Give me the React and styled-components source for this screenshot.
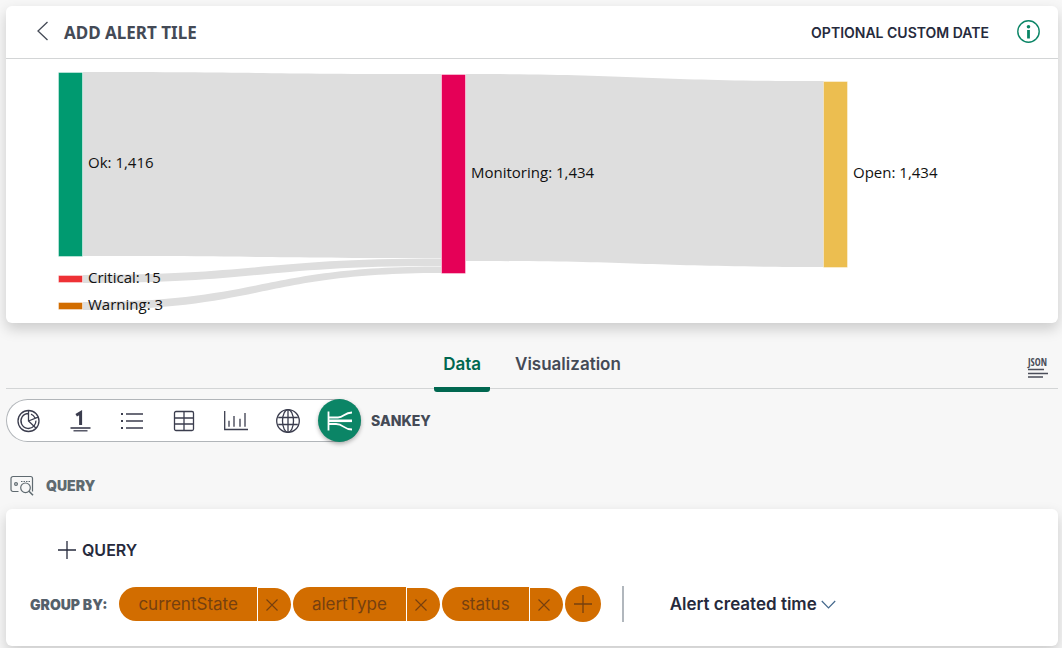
import { useState } from "react";
import styled, { createGlobalStyle } from "styled-components";

const GlobalStyle = createGlobalStyle`
  * {
    box-sizing: border-box;
  }

  body {
    margin: 0;
    background: #f7f7f7;
    color: #444a56;
    font-family: Inter, "Liberation Sans", sans-serif;
    font-size: 17px;
  }

  button {
    border: 0;
    padding: 0;
    background: none;
    color: inherit;
    font: inherit;
    cursor: pointer;
  }
`;

const Page = styled.main`
  padding: 6px 4px 2px 6px;
`;

const Card = styled.section`
  background: #fff;
  border-radius: 6px;
  box-shadow: 0 6px 14px rgba(0, 0, 0, 0.18);
`;

const CardHeader = styled.header`
  display: flex;
  align-items: center;
  height: 53px;
  padding: 0 18px 0 30px;
  border-bottom: 1px solid #d3d5d6;
`;

const BackButton = styled.button`
  display: flex;
  margin: 0 15px 2px 0;
`;

const Title = styled.h1`
  flex: 1;
  margin: 0;
  font-family: "Noto Sans", "Open Sans", sans-serif;
  font-size: 17px;
  font-weight: 700;
`;

const DateButton = styled.button`
  margin-right: 28px;
  color: #262a3c;
  font-size: 14px;
  font-weight: 600;
`;

const InfoButton = styled.button`
  display: flex;
  margin-bottom: 2px;
`;

const Chart = styled.svg`
  display: block;
  width: 100%;
  height: auto;

  text {
    font-family: "Open Sans", "Noto Sans", sans-serif;
    font-size: 15px;
    fill: #111;
  }
`;

const TabBar = styled.nav`
  display: flex;
  align-items: flex-end;
  height: 66px;
  border-bottom: 1px solid #d3d5d6;
`;

const TabSide = styled.div`
  display: flex;
  flex: 1;
  justify-content: flex-end;
  padding: 0 9px 10px 0;
`;

const Tabs = styled.div`
  display: flex;
  gap: 16px;
  margin-bottom: -4px;
`;

const Tab = styled.button`
  height: 42px;
  padding: 0 9px 10px;
  border-bottom: 5px solid ${({ $active }) => ($active ? "#006750" : "transparent")};
  border-radius: 3px;
  color: ${({ $active }) => ($active ? "#006750" : "#444a56")};
  font-weight: 600;
`;

const JsonButton = styled.button`
  display: flex;
`;

const TypeRow = styled.div`
  display: flex;
  align-items: center;
  gap: 10px;
  margin-top: 10px;
`;

const TypePicker = styled.div`
  display: flex;
  gap: 9px;
  background: #fff;
  border-radius: 22px;
  box-shadow: inset 0 0 0 1px #b1b5b9;
`;

const TypeButton = styled.button`
  display: flex;
  align-items: center;
  justify-content: center;
  width: 43px;
  height: 43px;
  border-radius: 50%;
  color: ${({ $active }) => ($active ? "#fff" : "#3b3d4e")};
  background: ${({ $active }) => ($active ? "#0b8566" : "transparent")};
  box-shadow: ${({ $active }) => ($active ? "0 2px 4px rgba(0, 0, 0, 0.3)" : "none")};
`;

const TypeName = styled.strong`
  font-size: 14px;
  font-weight: 800;
`;

const SectionHeading = styled.h2`
  display: flex;
  align-items: center;
  gap: 12px;
  height: 24px;
  margin: 31px 0 12px;
  padding-left: 4px;
  color: #5f6a70;
  font-size: 14px;
  font-weight: 900;
`;

const QueryCard = styled(Card)`
  padding: 28px 24px 24px;
`;

const AddQuery = styled.button`
  display: flex;
  align-items: center;
  gap: 6px;
  height: 26px;
  margin: 0 0 23px 28px;
  color: #262a3c;
  font-size: 16px;
  font-weight: 600;
`;

const GroupRow = styled.div`
  display: flex;
  align-items: center;
`;

const GroupLabel = styled.span`
  margin-right: 12px;
  color: #55616b;
  font-size: 14px;
  font-weight: 900;
`;

const Chip = styled.div`
  display: flex;
  align-items: flex-end;
  gap: 1px;
  margin-right: 2px;
`;

const ChipName = styled.button`
  height: 34px;
  padding: 0 19px;
  border-radius: 17px 0 0 17px;
  background: #d26d00;
  color: #76400f;
`;

const ChipRemove = styled.button`
  display: flex;
  align-items: center;
  justify-content: center;
  width: 33px;
  height: 33px;
  padding-right: 4px;
  border-radius: 0 17px 17px 0;
  background: #d26d00;
  color: #76400f;
`;

const AddGroup = styled.button`
  display: flex;
  align-items: center;
  justify-content: center;
  width: 36px;
  height: 36px;
  border-radius: 50%;
  background: #d26d00;
  color: #76400f;
`;

const Divider = styled.span`
  width: 2px;
  height: 36px;
  margin: 0 46px 0 21px;
  background: #b1b7bd;
`;

const TimeButton = styled.button`
  display: flex;
  align-items: center;
  gap: 4px;
  color: #262a3c;
  font-weight: 600;
`;

const Icon = ({ width = 24, height = width, stroke = 1.3, children }) => (
  <svg
    width={width}
    height={height}
    viewBox={`0 0 ${width} ${height}`}
    fill="none"
    stroke="currentColor"
    strokeWidth={stroke}
    aria-hidden="true"
  >
    {children}
  </svg>
);

const types = [
  {
    name: "Donut",
    icon: (
      <Icon>
        <circle cx="12.5" cy="12" r="10.5" />
        <path d="M12.5 4.5a7.500 7.500 0 1 0 5.600 12.400M12.500 1.500V12l7.600 7.200M12.500 12l9.600-3.800M15 5.200a7.500 7.500 0 0 1 4 3.800M19.900 11.600a7.400 7.400 0 0 1-1.600 5" />
      </Icon>
    ),
  },
  {
    name: "Number",
    icon: (
      <Icon>
        <path d="M8.2 6.2 12.600 3.600V16" strokeWidth="3" />
        <path d="M2.500 19h20" strokeWidth="1.600" />
        <path d="M5.500 21.800h14" />
      </Icon>
    ),
  },
  {
    name: "List",
    icon: (
      <Icon>
        <path d="M6 5h17M6 12h17M6 19h17" />
        <path d="M1 5h2M1 12h2M1 19h2" strokeWidth="2" />
      </Icon>
    ),
  },
  {
    name: "Table",
    icon: (
      <Icon>
        <rect x="2.5" y="2.5" width="19" height="19" rx="1.5" />
        <path d="M12 2.5v19M2.5 9h19M2.5 15h19" />
      </Icon>
    ),
  },
  {
    name: "Bar chart",
    icon: (
      <Icon>
        <path d="M.7 2v18.5h23.8M5 11.8v6M10 7v10.8M16 9.8v8M21 4v13.8" />
      </Icon>
    ),
  },
  {
    name: "Map",
    icon: (
      <Icon>
        <circle cx="12" cy="12" r="11.3" />
        <ellipse cx="12" cy="12" rx="5.5" ry="11.3" />
        <path d="M12 .7v22.6M2.2 8.5h19.6M2.2 15.5h19.6" />
      </Icon>
    ),
  },
  {
    name: "Sankey",
    icon: (
      <Icon width={26} height={24} stroke={1.8}>
        <path d="M1.5 2.5v19" />
        <path d="M2 8.5h9c6 0 6-5 14-5M2 15h7c8 0 7 5.5 16 5.5" />
        <path d="M2 11.8h23" strokeWidth="2.6" />
      </Icon>
    ),
  },
];

const nodes = [
  { label: "Ok: 1,416", x: 52, y: 13, height: 185, color: "#009a70", textY: 109 },
  { label: "Critical: 15", x: 52, y: 216, height: 8, color: "#ee3135", textY: 224 },
  { label: "Warning: 3", x: 52, y: 243, height: 8, color: "#d26d00", textY: 251 },
  { label: "Monitoring: 1,434", x: 435, y: 15, height: 200, color: "#e50057", textY: 119 },
  { label: "Open: 1,434", x: 817, y: 22, height: 187, color: "#ecbe50", textY: 119 },
];

// from and to are the [top, bottom] edges of the ribbon on each side
const links = [
  { x1: 77, x2: 435, from: [13, 197], to: [15, 199] },
  { x1: 77, x2: 435, from: [216, 224], to: [199.6, 207] },
  { x1: 77, x2: 435, from: [243, 251], to: [207.6, 214] },
  { x1: 460, x2: 818, from: [15, 202], to: [22, 208] },
];

const ribbon = ({ x1, x2, from, to }) => {
  const mid = (x1 + x2) / 2;
  return (
    `M${x1} ${from[0]}C${mid} ${from[0]} ${mid} ${to[0]} ${x2} ${to[0]}` +
    `V${to[1]}C${mid} ${to[1]} ${mid} ${from[1]} ${x1} ${from[1]}Z`
  );
};

const SankeyChart = () => (
  <Chart viewBox="0 0 1052 264" role="img" aria-label="Sankey">
    {links.map((link) => (
      <path key={ribbon(link)} d={ribbon(link)} fill="#dedede" />
    ))}
    {nodes.map((node) => (
      <g key={node.label}>
        <rect
          x={node.x + 0.5}
          y={node.y + 0.5}
          width="24"
          height={node.height - 1}
          fill={node.color}
          stroke="#fff"
          strokeOpacity="0.4"
        />
        <text x={node.x + 30} y={node.textY}>
          {node.label}
        </text>
      </g>
    ))}
  </Chart>
);

const App = () => {
  const [tab, setTab] = useState("Data");
  const [type, setType] = useState("Sankey");
  const [groups, setGroups] = useState(["currentState", "alertType", "status"]);

  return (
    <Page>
      <GlobalStyle />
      <Card>
        <CardHeader>
          <BackButton aria-label="Back">
            <Icon width={13} height={20}>
              <path d="M11.5 1 2 10l9.5 9" />
            </Icon>
          </BackButton>
          <Title>ADD ALERT TILE</Title>
          <DateButton>OPTIONAL CUSTOM DATE</DateButton>
          <InfoButton aria-label="Info">
            <svg width="23" height="23" viewBox="0 0 23 23" fill="none" stroke="#0b8566">
              <circle cx="11.5" cy="11.5" r="10.7" strokeWidth="1.4" />
              <circle cx="11.5" cy="6.7" r="1.8" fill="#0b8566" stroke="none" />
              <path d="M11.5 10v8.5" strokeWidth="2.8" />
            </svg>
          </InfoButton>
        </CardHeader>
        <SankeyChart />
      </Card>

      <TabBar>
        <TabSide />
        <Tabs>
          {["Data", "Visualization"].map((name) => (
            <Tab key={name} $active={tab === name} onClick={() => setTab(name)}>
              {name}
            </Tab>
          ))}
        </Tabs>
        <TabSide>
          <JsonButton>
            <svg width="24" height="22" viewBox="0 0 24 22" fill="none" stroke="#4b4e5a">
              <text
                x="3"
                y="10"
                fill="#4b4e5a"
                stroke="none"
                fontFamily="'Liberation Sans Narrow', 'Open Sans Condensed', 'Roboto Condensed', sans-serif"
                fontSize="10"
                fontWeight="700"
              >
                JSON
              </text>
              <path d="M3 13.5h16M3 17.5h20M3 21h15" strokeWidth="1.4" />
            </svg>
          </JsonButton>
        </TabSide>
      </TabBar>

      <TypeRow>
        <TypePicker>
          {types.map(({ name, icon }) => (
            <TypeButton
              key={name}
              aria-label={name}
              $active={type === name}
              onClick={() => setType(name)}
            >
              {icon}
            </TypeButton>
          ))}
        </TypePicker>
        <TypeName>{type.toUpperCase()}</TypeName>
      </TypeRow>

      <SectionHeading>
        <Icon width={24} height={22} stroke={1.2}>
          <path d="M8.5 17.5H3a2 2 0 0 1-2-2v-11a2 2 0 0 1 2-2h17.5a2 2 0 0 1 2 2v13" />
          <circle cx="6" cy="10" r="1.4" />
          <path d="M11 7.5h9" strokeDasharray="1.5 1" />
          <circle cx="15.5" cy="13.8" r="4.8" />
          <path d="m19 17.3 4 4" strokeWidth="1.6" />
        </Icon>
        QUERY
      </SectionHeading>

      <QueryCard>
        <AddQuery>
          <Icon width={18}>
            <path d="M9 0v18M0 9h18" />
          </Icon>
          QUERY
        </AddQuery>
        <GroupRow>
          <GroupLabel>GROUP BY:</GroupLabel>
          {groups.map((group) => (
            <Chip key={group}>
              <ChipName>{group}</ChipName>
              <ChipRemove
                aria-label={`Remove ${group}`}
                onClick={() => setGroups(groups.filter((g) => g !== group))}
              >
                <Icon width={12} stroke={1.1}>
                  <path d="m.5.5 11 11m0-11-11 11" />
                </Icon>
              </ChipRemove>
            </Chip>
          ))}
          <AddGroup aria-label="Add group">
            <Icon width={18}>
              <path d="M9 0v18M0 9h18" />
            </Icon>
          </AddGroup>
          <Divider />
          <TimeButton>
            Alert created time
            <Icon width={15} height={9} stroke={1.2}>
              <path d="m.8 1 6.7 7 6.7-7" stroke="#44688c" />
            </Icon>
          </TimeButton>
        </GroupRow>
      </QueryCard>
    </Page>
  );
};

export default App;
